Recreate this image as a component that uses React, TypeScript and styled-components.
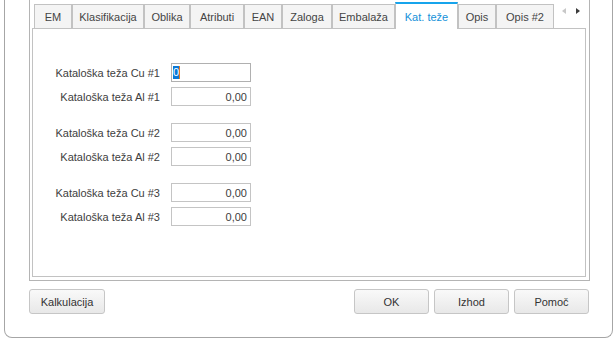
import React from 'react';
import styled, {createGlobalStyle} from 'styled-components';

const GlobalStyle = createGlobalStyle`
  html, body {
    margin: 0;
    padding: 0;
    background: #ffffff;
  }
  body {
    font-family: "Liberation Sans", Arial, sans-serif;
    font-size: 11px;
    color: #404040;
  }
`;

interface TabDef {
  label: string;
  width: number;
  active?: boolean;
}

const tabs: TabDef[] = [
  {label: 'EM', width: 38},
  {label: 'Klasifikacija', width: 72},
  {label: 'Oblika', width: 46},
  {label: 'Atributi', width: 54},
  {label: 'EAN', width: 38},
  {label: 'Zaloga', width: 50},
  {label: 'Embalaža', width: 63},
  {label: 'Kat. teže', width: 63, active: true},
  {label: 'Opis', width: 38},
  {label: 'Opis #2', width: 58},
];

// groups of two weight fields
const groups = [
  ['Kataloška teža Cu #1', 'Kataloška teža Al #1'],
  ['Kataloška teža Cu #2', 'Kataloška teža Al #2'],
  ['Kataloška teža Cu #3', 'Kataloška teža Al #3'],
];

const App = () => {
  return (
    <>
      <GlobalStyle />
      <Window>
        <OuterBox>
          <TabStrip>
            {tabs.map(tab => (
              <Tab key={tab.label} $active={tab.active} style={{width: tab.width}}>
                {tab.label}
              </Tab>
            ))}
            <Scroller>
              <Arrow $dir="left" />
              <Arrow $dir="right" />
            </Scroller>
          </TabStrip>
          <Panel>
            <Form>
              {groups.map((group, gi) => (
                <Group key={gi}>
                  {group.map((label, li) => (
                    <Row key={label}>
                      <Label>{label}</Label>
                      <Field $focused={gi === 0 && li === 0}>
                        {gi === 0 && li === 0 ? (
                          <Selected>0</Selected>
                        ) : (
                          '0,00'
                        )}
                      </Field>
                    </Row>
                  ))}
                </Group>
              ))}
            </Form>
          </Panel>
        </OuterBox>
        <ButtonBar>
          <Button>Kalkulacija</Button>
          <Spacer />
          <Button>OK</Button>
          <Button>Izhod</Button>
          <Button>Pomoč</Button>
        </ButtonBar>
      </Window>
    </>
  );
};

export default App;

const Window = styled.div`
  box-sizing: border-box;
  margin-left: 4px;
  width: 609px;
  height: 338px;
  border: 1px solid #a6a6a6;
  border-top: none;
  border-radius: 0 0 8px 8px;
  padding-left: 24px;
  display: flex;
  flex-direction: column;
`;

const OuterBox = styled.div`
  box-sizing: border-box;
  width: 561px;
  height: 281px;
  border: 1px solid #b4b4b4;
  border-top: none;
  padding: 0 3px 3px 2px;
  display: flex;
  flex-direction: column;
`;

const TabStrip = styled.div`
  height: 28px;
  display: flex;
  align-items: flex-end;
  padding-left: 2px;
`;

const Tab = styled.div<{$active?: boolean}>`
  box-sizing: border-box;
  display: flex;
  align-items: center;
  justify-content: center;
  white-space: nowrap;
  border: 1px solid #c2c2c2;
  border-bottom: none;
  background: ${p => (p.$active ? '#ffffff' : '#f4f4f4')};
  color: ${p => (p.$active ? '#1591d9' : '#444444')};
  height: ${p => (p.$active ? '27px' : '24px')};
  padding-top: ${p => (p.$active ? '0' : '1px')};
  margin-bottom: ${p => (p.$active ? '-1px' : '0')};
  border-top: ${p => (p.$active ? '2px solid #17a4ec' : '1px solid #c2c2c2')};
  position: relative;
  z-index: ${p => (p.$active ? 1 : 0)};
`;

const Scroller = styled.div`
  display: flex;
  align-items: center;
  gap: 10px;
  height: 20px;
  margin-left: 8px;
  align-self: flex-start;
  margin-top: 1px;
`;

const Arrow = styled.span<{$dir: 'left' | 'right'}>`
  width: 0;
  height: 0;
  border-top: 3px solid transparent;
  border-bottom: 3px solid transparent;
  ${p =>
    p.$dir === 'left'
      ? 'border-right: 4px solid #c8c8c8;'
      : 'border-left: 4px solid #3c3c3c;'}
`;

const Panel = styled.div`
  box-sizing: border-box;
  height: 249px;
  border: 1px solid #c2c2c2;
  background: #ffffff;
`;

const Form = styled.div`
  padding-top: 34px;
  display: flex;
  flex-direction: column;
  gap: 17px;
`;

const Group = styled.div`
  display: flex;
  flex-direction: column;
  gap: 5px;
`;

const Row = styled.div`
  display: flex;
  align-items: center;
  gap: 11px;
`;

const Label = styled.div`
  width: 127px;
  text-align: right;
  white-space: nowrap;
  color: #404040;
`;

const Field = styled.div<{$focused?: boolean}>`
  box-sizing: border-box;
  width: 80px;
  height: 19px;
  border: 1px solid ${p => (p.$focused ? '#b0b0b0' : '#c4c4c4')};
  background: #ffffff;
  display: flex;
  align-items: center;
  justify-content: ${p => (p.$focused ? 'flex-start' : 'flex-end')};
  padding: 0 3px 0 1px;
  color: #404040;
`;

const Selected = styled.span`
  background: #0a78d7;
  color: #ffffff;
  padding: 0;
  line-height: 13px;
  border-right: 1px solid #e07a20;
`;

const ButtonBar = styled.div`
  display: flex;
  gap: 5px;
  margin-top: 8px;
  width: 560px;
`;

const Spacer = styled.div`
  flex: 1;
`;

const Button = styled.div`
  box-sizing: border-box;
  width: 75px;
  height: 25px;
  display: flex;
  align-items: center;
  justify-content: center;
  border: 1px solid #c6c6c6;
  border-radius: 3px;
  background: linear-gradient(#f9f9f9, #e8e8e8);
  color: #333333;
  &:first-child {
    width: 76px;
  }
`;
